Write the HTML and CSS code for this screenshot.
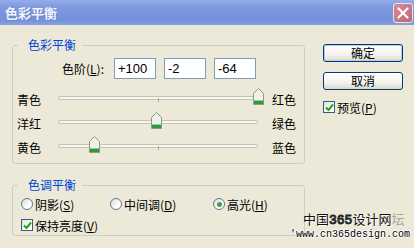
FILE: index.html
```html
<!DOCTYPE html>
<html>
<head>
<meta charset="utf-8">
<title>色彩平衡</title>
<link rel="stylesheet" href="styles.css">
</head>
<body>
<div class="dialog">
  <div class="titlebar">
    <span class="title">色彩平衡</span>
    <span class="close">
      <svg width="12" height="12" viewBox="0 0 12 12"><path d="M1.5 1.5 L10.5 10.5 M10.5 1.5 L1.5 10.5" stroke="#fff" stroke-width="2.2" stroke-linecap="round"/></svg>
    </span>
  </div>
  <div class="content">
    <div class="leftcol">
      <fieldset class="group balance">
        <legend>色彩平衡</legend>
        <div class="levels">
          <span class="levlabel">色阶(<u>L</u>):</span>
          <span class="field">+100</span>
          <span class="field">-2</span>
          <span class="field">-64</span>
        </div>
        <div class="slider">
          <span class="lname">青色</span>
          <div class="track"><span class="groove"></span><span class="tick"></span>
            <span class="thumb" style="left: 100%"><svg width="11" height="17" viewBox="0 0 11 17"><path d="M0.5 5.5 L5.5 0.5 L10.5 5.5 L10.5 16.5 L0.5 16.5 Z" fill="#eef2ea" stroke="#8d9a8a"/><rect x="1" y="13" width="9" height="3" fill="#2e9a3a"/><rect x="1" y="12" width="9" height="1" fill="#8fd08f"/></svg></span>
          </div>
          <span class="rname">红色</span>
        </div>
        <div class="slider">
          <span class="lname">洋红</span>
          <div class="track"><span class="groove"></span><span class="tick"></span>
            <span class="thumb" style="left: 49%"><svg width="11" height="17" viewBox="0 0 11 17"><path d="M0.5 5.5 L5.5 0.5 L10.5 5.5 L10.5 16.5 L0.5 16.5 Z" fill="#eef2ea" stroke="#8d9a8a"/><rect x="1" y="13" width="9" height="3" fill="#2e9a3a"/><rect x="1" y="12" width="9" height="1" fill="#8fd08f"/></svg></span>
          </div>
          <span class="rname">绿色</span>
        </div>
        <div class="slider">
          <span class="lname">黄色</span>
          <div class="track"><span class="groove"></span><span class="tick"></span>
            <span class="thumb" style="left: 18%"><svg width="11" height="17" viewBox="0 0 11 17"><path d="M0.5 5.5 L5.5 0.5 L10.5 5.5 L10.5 16.5 L0.5 16.5 Z" fill="#eef2ea" stroke="#8d9a8a"/><rect x="1" y="13" width="9" height="3" fill="#2e9a3a"/><rect x="1" y="12" width="9" height="1" fill="#8fd08f"/></svg></span>
          </div>
          <span class="rname">蓝色</span>
        </div>
      </fieldset>

      <fieldset class="group tone">
        <legend>色调平衡</legend>
        <div class="radios">
          <span class="opt w1"><span class="radio"></span>阴影(<u>S</u>)</span>
          <span class="opt w2"><span class="radio"></span>中间调(<u>D</u>)</span>
          <span class="opt"><span class="radio on"><span class="dot"></span></span>高光(<u>H</u>)</span>
        </div>
        <div class="keep">
          <span class="opt"><span class="check"><svg width="9" height="9" viewBox="0 0 9 9"><path d="M1 4.5 L3.5 7 L8 1.5" fill="none" stroke="#21a121" stroke-width="2"/></svg></span>保持亮度(<u>V</u>)</span>
        </div>
      </fieldset>
    </div>

    <div class="rightcol">
      <div class="btn default">确定</div>
      <div class="btn">取消</div>
      <div class="preview"><span class="check"><svg width="9" height="9" viewBox="0 0 9 9"><path d="M1 4.5 L3.5 7 L8 1.5" fill="none" stroke="#21a121" stroke-width="2"/></svg></span>预览(<u>P</u>)</div>
    </div>
  </div>

  <div class="watermark">
    <div class="wm1">中国<span class="num">365</span>设计网<span class="faded">坛</span></div>
    <div class="wm2">'www.cn365design.com</div>
  </div>
</div>
</body>
</html>
```

FILE: styles.css
```css
body {
    margin: 0;
    background: #ece9d8;
    font-family: "Noto Sans CJK SC", "Liberation Sans", sans-serif;
    font-size: 12px;
    color: #000;
}
.dialog {
    position: relative;
    width: 414px;
    height: 248px;
    overflow: hidden;
    background: #ece9d8;
}
.titlebar {
    height: 25px;
    display: flex;
    align-items: center;
    justify-content: space-between;
    padding: 0 1px 0 5px;
    box-sizing: border-box;
    background: linear-gradient(#95aee9, #7d99e0 30%, #7390da 80%, #88a2e2);
}
.title {
    color: #f2f5ff;
    font-size: 13px;
    font-weight: bold;
    line-height: 16px;
    text-shadow: 1px 1px 0 #6a84c4;
}
.close {
    width: 18px;
    height: 18px;
    display: flex;
    align-items: center;
    justify-content: center;
    border: 1px solid #efe2ea;
    border-radius: 3px;
    background: linear-gradient(135deg, #d68d98, #bd6674);
}
.content {
    display: flex;
    padding: 12px 0 0 12px;
}
.leftcol {
    width: 293px;
}
.group {
    margin: 0;
    padding: 0 8px 0 4px;
    border: 1px solid #d0cebf;
    border-radius: 3px;
}
.group legend {
    margin-left: 1px;
    padding: 0 6px 0 10px;
    line-height: 16px;
    color: #0046d5;
}
.balance {
    padding-bottom: 4px;
}
.levels {
    display: flex;
    align-items: center;
    height: 21px;
    margin-top: 5px;
}
.levlabel {
    width: 87px;
    text-align: right;
    margin-right: 10px;
}
.field {
    width: 42px;
    height: 21px;
    box-sizing: border-box;
    margin-right: 8px;
    padding-left: 3px;
    border: 1px solid #7f9db9;
    background: #fff;
    font-family: "Liberation Sans", sans-serif;
    font-size: 13px;
    line-height: 19px;
}
.slider {
    display: flex;
    align-items: center;
    height: 24px;
}
.levels + .slider {
    margin-top: 8px;
}
.lname {
    width: 41px;
}
.track {
    position: relative;
    width: 200px;
    height: 24px;
}
.groove {
    position: absolute;
    left: 0;
    right: 0;
    top: 9px;
    height: 2px;
    border: 1px solid #c6c3b4;
    border-radius: 2px;
    background: #f7f6f0;
}
.tick {
    position: absolute;
    left: 100px;
    top: 11px;
    width: 1px;
    height: 4px;
    background: #a8a596;
}
.thumb {
    position: absolute;
    top: 1px;
    width: 11px;
    height: 17px;
    margin-left: -5px;
}
.thumb svg {
    display: block;
}
.rname {
    margin-left: 14px;
}
.tone {
    margin-top: 13px;
    padding-bottom: 3px;
}
.radios, .keep {
    display: flex;
    align-items: center;
    height: 14px;
    padding-left: 4px;
}
.radios {
    margin-top: 4px;
}
.keep {
    margin-top: 7px;
}
.opt {
    display: flex;
    align-items: center;
}
.w1 {
    width: 89px;
}
.w2 {
    width: 103px;
}
.radio {
    width: 12px;
    height: 12px;
    box-sizing: border-box;
    margin-right: 2px;
    border: 1px solid #5f7894;
    border-radius: 50%;
    background: linear-gradient(135deg, #dcdcd4, #ffffff 70%);
    display: flex;
    align-items: center;
    justify-content: center;
}
.dot {
    width: 5px;
    height: 5px;
    border-radius: 50%;
    background: #3aa33a;
}
.check {
    width: 12px;
    height: 12px;
    box-sizing: border-box;
    margin-right: 2px;
    border: 1px solid #3b5b7d;
    background: linear-gradient(135deg, #e0dfd7, #ffffff 70%);
    display: flex;
    align-items: center;
    justify-content: center;
}
.rightcol {
    margin-left: 18px;
    width: 80px;
    padding-top: 7px;
}
.btn {
    height: 18px;
    box-sizing: border-box;
    border: 1px solid #003c74;
    border-radius: 3px;
    background: linear-gradient(#ffffff, #f4f3ee 60%, #dcd8cb);
    text-align: center;
    line-height: 16px;
    margin-bottom: 10px;
}
.btn.default {
    box-shadow: inset 0 0 0 1px #b4cbf0;
}
.preview {
    display: flex;
    align-items: center;
    margin-top: 8px;
    height: 14px;
}
.watermark {
    position: absolute;
    left: 290px;
    top: 210px;
}
.wm1 {
    padding-left: 13px;
    font-size: 13px;
    line-height: 17px;
    color: #111;
    text-shadow: 1px 1px 0 #fff;
}
.num {
    font-family: "Liberation Mono", monospace;
    color: #ece9d8;
    -webkit-text-stroke: 1px #222;
}
.faded {
    color: #a9a79c;
    text-shadow: none;
}
.wm2 {
    font-family: "Liberation Mono", monospace;
    font-size: 10px;
    line-height: 12px;
    color: #000;
    text-shadow: 1px 0 0 #fff, -1px 0 0 #fff, 0 1px 0 #fff, 0 -1px 0 #fff;
}
```
